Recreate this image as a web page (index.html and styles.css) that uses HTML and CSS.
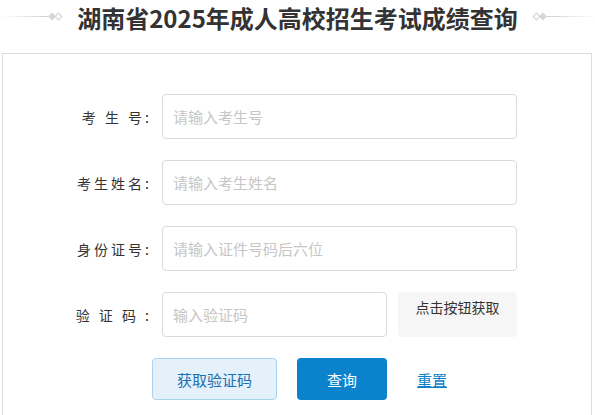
FILE: index.html
```html
<!DOCTYPE html>
<html lang="zh">
<head>
    <meta charset="UTF-8">
    <meta name="viewport" content="width=device-width, initial-scale=1.0">
    <title>湖南省2025年成人高校招生考试成绩查询</title>
    <link rel="stylesheet" href="styles.css">
</head>
<body>
    <div class="header">
        <div class="deco deco-left">
            <span class="deco-line"></span>
            <svg class="deco-mark" width="15" height="9" viewBox="0 0 15 9">
                <polygon points="4,0.5 8,4.5 4,8.5 0,4.5" fill="#d6d6d6"/>
                <polygon points="10.5,1.2 13.8,4.5 10.5,7.8 7.2,4.5" fill="none" stroke="#d6d6d6" stroke-width="1.2"/>
            </svg>
        </div>
        <h1>湖南省2025年成人高校招生考试成绩查询</h1>
        <div class="deco deco-right">
            <svg class="deco-mark" width="15" height="9" viewBox="0 0 15 9">
                <polygon points="4.5,1.2 7.8,4.5 4.5,7.8 1.2,4.5" fill="none" stroke="#d6d6d6" stroke-width="1.2"/>
                <polygon points="11,0.5 15,4.5 11,8.5 7,4.5" fill="#d6d6d6"/>
            </svg>
            <span class="deco-line"></span>
        </div>
    </div>

    <div class="panel">
        <!-- 查询表单 -->
        <div class="form-row">
            <label class="form-label">考&nbsp;生&nbsp;号:</label>
            <input type="text" class="form-input" placeholder="请输入考生号">
        </div>
        <div class="form-row">
            <label class="form-label">考生姓名:</label>
            <input type="text" class="form-input" placeholder="请输入考生姓名">
        </div>
        <div class="form-row">
            <label class="form-label">身份证号:</label>
            <input type="text" class="form-input" placeholder="请输入证件号码后六位">
        </div>
        <div class="form-row">
            <label class="form-label">验&nbsp;证&nbsp;码&nbsp;:</label>
            <input type="text" class="form-input code-input" placeholder="输入验证码">
            <div class="code-box">点击按钮获取</div>
        </div>

        <div class="actions">
            <button class="btn btn-light">获取验证码</button>
            <button class="btn btn-primary">查询</button>
            <a href="#" class="reset-link">重置</a>
        </div>
    </div>
</body>
</html>
```

FILE: styles.css
```css
body {
    margin: 0;
    font-family: "Noto Sans CJK SC", "Liberation Sans", sans-serif;
    background-color: #fff;
    color: #333;
}

.header {
    display: flex;
    align-items: center;
    height: 35px;
    margin-bottom: 18px;
}

.header h1 {
    margin: 0 14px;
    font-size: 24px;
    font-weight: bold;
    line-height: 35px;
    color: #333;
    white-space: nowrap;
}

.deco {
    flex: 1;
    display: flex;
    align-items: center;
    margin-top: -3px;
}

.deco-line {
    flex: 1;
    height: 1px;
}

.deco-left .deco-line {
    background: linear-gradient(to right, rgba(214,214,214,0), #d0d0d0);
}

.deco-right .deco-line {
    background: linear-gradient(to left, rgba(214,214,214,0), #d0d0d0);
}

.deco-mark {
    display: block;
}

.panel {
    box-sizing: border-box;
    width: 590px;
    height: 380px;
    margin-left: 2px;
    padding-top: 40px;
    border: 1px solid #dcdcdc;
    border-bottom: none;
}

.form-row {
    display: flex;
    align-items: center;
    height: 45px;
    margin-bottom: 21px;
}

.form-label {
    width: 149px;
    margin-right: 10px;
    text-align: right;
    font-size: 14px;
    letter-spacing: 3px;
    color: #333;
}

.form-input {
    box-sizing: border-box;
    width: 355px;
    height: 45px;
    padding: 0 10px;
    border: 1px solid #dadada;
    border-radius: 4px;
    font-family: inherit;
    font-size: 15px;
    color: #333;
    outline: none;
}

.form-input::placeholder {
    color: #c6c6c6;
}

.code-input {
    width: 225px;
}

.code-box {
    box-sizing: border-box;
    width: 119px;
    height: 45px;
    margin-left: 11px;
    padding-top: 5px;
    background-color: #f6f6f6;
    border-radius: 4px;
    text-align: center;
    font-size: 14px;
    color: #333;
}

.actions {
    display: flex;
    align-items: center;
    padding-left: 149px;
}

.btn {
    box-sizing: border-box;
    height: 42px;
    border-radius: 4px;
    font-family: inherit;
    font-size: 15px;
    cursor: pointer;
}

.btn-light {
    width: 125px;
    background-color: #e4f1fa;
    border: 1px solid #a9d3f1;
    color: #1b6fb3;
}

.btn-primary {
    width: 90px;
    margin-left: 20px;
    background-color: #0a82cc;
    border: none;
    color: #fff;
}

.reset-link {
    margin-left: 30px;
    font-size: 15px;
    color: #0b7ec8;
    text-decoration: underline;
}
```
